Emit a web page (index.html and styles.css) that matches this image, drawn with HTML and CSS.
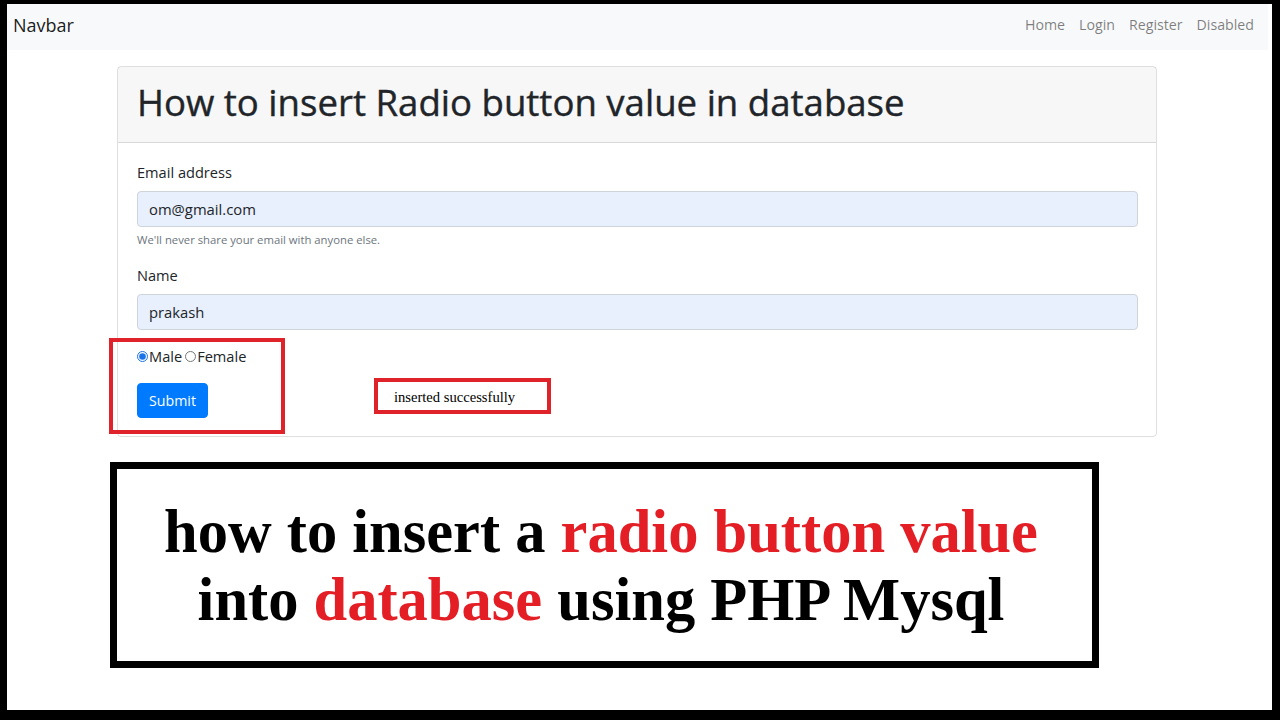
FILE: index.html
```html
<!DOCTYPE html>
<html lang="en">
<head>
  <meta charset="UTF-8" />
  <meta name="viewport" content="width=device-width, initial-scale=1.0"/>
  <title>Radio button insert</title>
  <link rel="stylesheet" href="styles.css">
</head>
<body>

<div class="frame">
  <nav class="navbar">
    <a class="brand" href="#">Navbar</a>
    <div class="nav-links">
      <a href="#">Home</a>
      <a href="#">Login</a>
      <a href="#">Register</a>
      <a href="#" class="disabled">Disabled</a>
    </div>
  </nav>

  <div class="card">
    <div class="card-header">
      <h1>How to insert Radio button value in database</h1>
    </div>
    <form class="card-body" method="post">
      <div class="form-group">
        <label for="email">Email address</label>
        <input type="email" id="email" class="form-control autofill" value="om@gmail.com" />
        <small>We'll never share your email with anyone else.</small>
      </div>
      <div class="form-group">
        <label for="name">Name</label>
        <input type="text" id="name" class="form-control autofill" value="prakash" />
      </div>
      <div class="radio-row">
        <input type="radio" name="gender" id="male" value="Male" checked /><label for="male">Male</label>
        <input type="radio" name="gender" id="female" value="Female" /><label for="female">Female</label>
      </div>
      <div class="submit-row">
        <button type="submit" class="btn">Submit</button>
        <div class="notice">inserted successfully</div>
      </div>
      <!-- highlight around the radio + submit -->
      <div class="mark"></div>
    </form>
  </div>

  <div class="banner">
    <p>how to insert a <span class="red">radio button value</span><br>
    into <span class="red">database</span> using PHP Mysql</p>
  </div>
</div>

</body>
</html>
```

FILE: styles.css
```css
* {
  box-sizing: border-box;
}

body {
  margin: 0;
  background-color: #000;
  font-family: 'Segoe UI', 'Open Sans', sans-serif;
  color: #212529;
}

.frame {
  height: 720px;
  background-color: #fff;
  border-style: solid;
  border-color: #000;
  border-width: 4px 8px 10px 7px;
  overflow: hidden;
}

.navbar {
  height: 46px;
  margin-right: 4px;
  background-color: #f8f9fa;
  display: flex;
  justify-content: space-between;
  align-items: center;
  padding: 0 14px 5px 6px;
}

.brand {
  font-size: 18px;
  color: rgba(0, 0, 0, 0.9);
  text-decoration: none;
}

.nav-links {
  display: flex;
  gap: 14px;
}

.nav-links a {
  font-size: 14.2px;
  color: rgba(0, 0, 0, 0.5);
  text-decoration: none;
}

.card {
  position: relative;
  width: 1040px;
  margin: 16px 0 0 110px;
  border: 1px solid rgba(0, 0, 0, 0.125);
  border-radius: 4px;
}

.card-header {
  height: 76px;
  display: flex;
  align-items: center;
  padding: 0 19px 3px;
  background-color: rgba(0, 0, 0, 0.03);
  border-bottom: 1px solid rgba(0, 0, 0, 0.125);
}

.card-header h1 {
  margin: 0;
  font-size: 36.6px;
  font-weight: 500;
  line-height: 1.2;
  -webkit-text-stroke: 0.4px #212529;
}

.card-body {
  padding: 18px 18px 18px 19px;
  font-size: 14.6px;
  line-height: 22.5px;
}

.form-group {
  margin-bottom: 15px;
}

.form-group label {
  display: block;
  margin-bottom: 7.5px;
}

.form-control {
  display: block;
  width: 100%;
  height: 36px;
  padding: 0 11px;
  font-family: inherit;
  font-size: 14.8px;
  color: #212529;
  border: 1px solid #ced4da;
  border-radius: 4px;
}

.form-control.autofill {
  background-color: #e8f0fe;
}

.form-group small {
  display: block;
  margin-top: 4px;
  font-size: 11.3px;
  line-height: 18px;
  color: #6c757d;
}

.radio-row {
  display: flex;
  align-items: center;
}

.radio-row input {
  width: 11px;
  height: 11px;
  margin: 0 1px 0 0;
  accent-color: #1a73e8;
}

.radio-row label + input {
  margin-left: 3px;
}

.submit-row {
  display: flex;
  align-items: flex-start;
  margin-top: 15px;
}

.btn {
  height: 35.5px;
  padding: 0 11px;
  font-family: inherit;
  font-size: 14.2px;
  color: #fff;
  background-color: #007bff;
  border: 1px solid #007bff;
  border-radius: 4px;
  cursor: pointer;
}

.notice {
  width: 177px;
  height: 36px;
  margin: -5px 0 0 166px;
  padding: 4px 0 0 16px;
  border: 4px solid #e0232b;
  font-family: 'Liberation Serif', 'Times New Roman', serif;
  font-size: 14.6px;
  line-height: 22px;
  color: #000;
}

.mark {
  position: absolute;
  left: -9px;
  top: 271px;
  width: 176px;
  height: 96px;
  border: 4px solid #e0232b;
}

.banner {
  width: 989px;
  height: 206px;
  margin: 25px 0 0 103px;
  border: 7px solid #000;
  padding: 29px 7px 0 0;
}

.banner p {
  margin: 0;
  text-align: center;
  font-family: 'Liberation Serif', 'Times New Roman', serif;
  font-weight: bold;
  font-size: 60.5px;
  line-height: 68px;
  color: #000;
}

.banner .red {
  color: #e31e25;
}
```
